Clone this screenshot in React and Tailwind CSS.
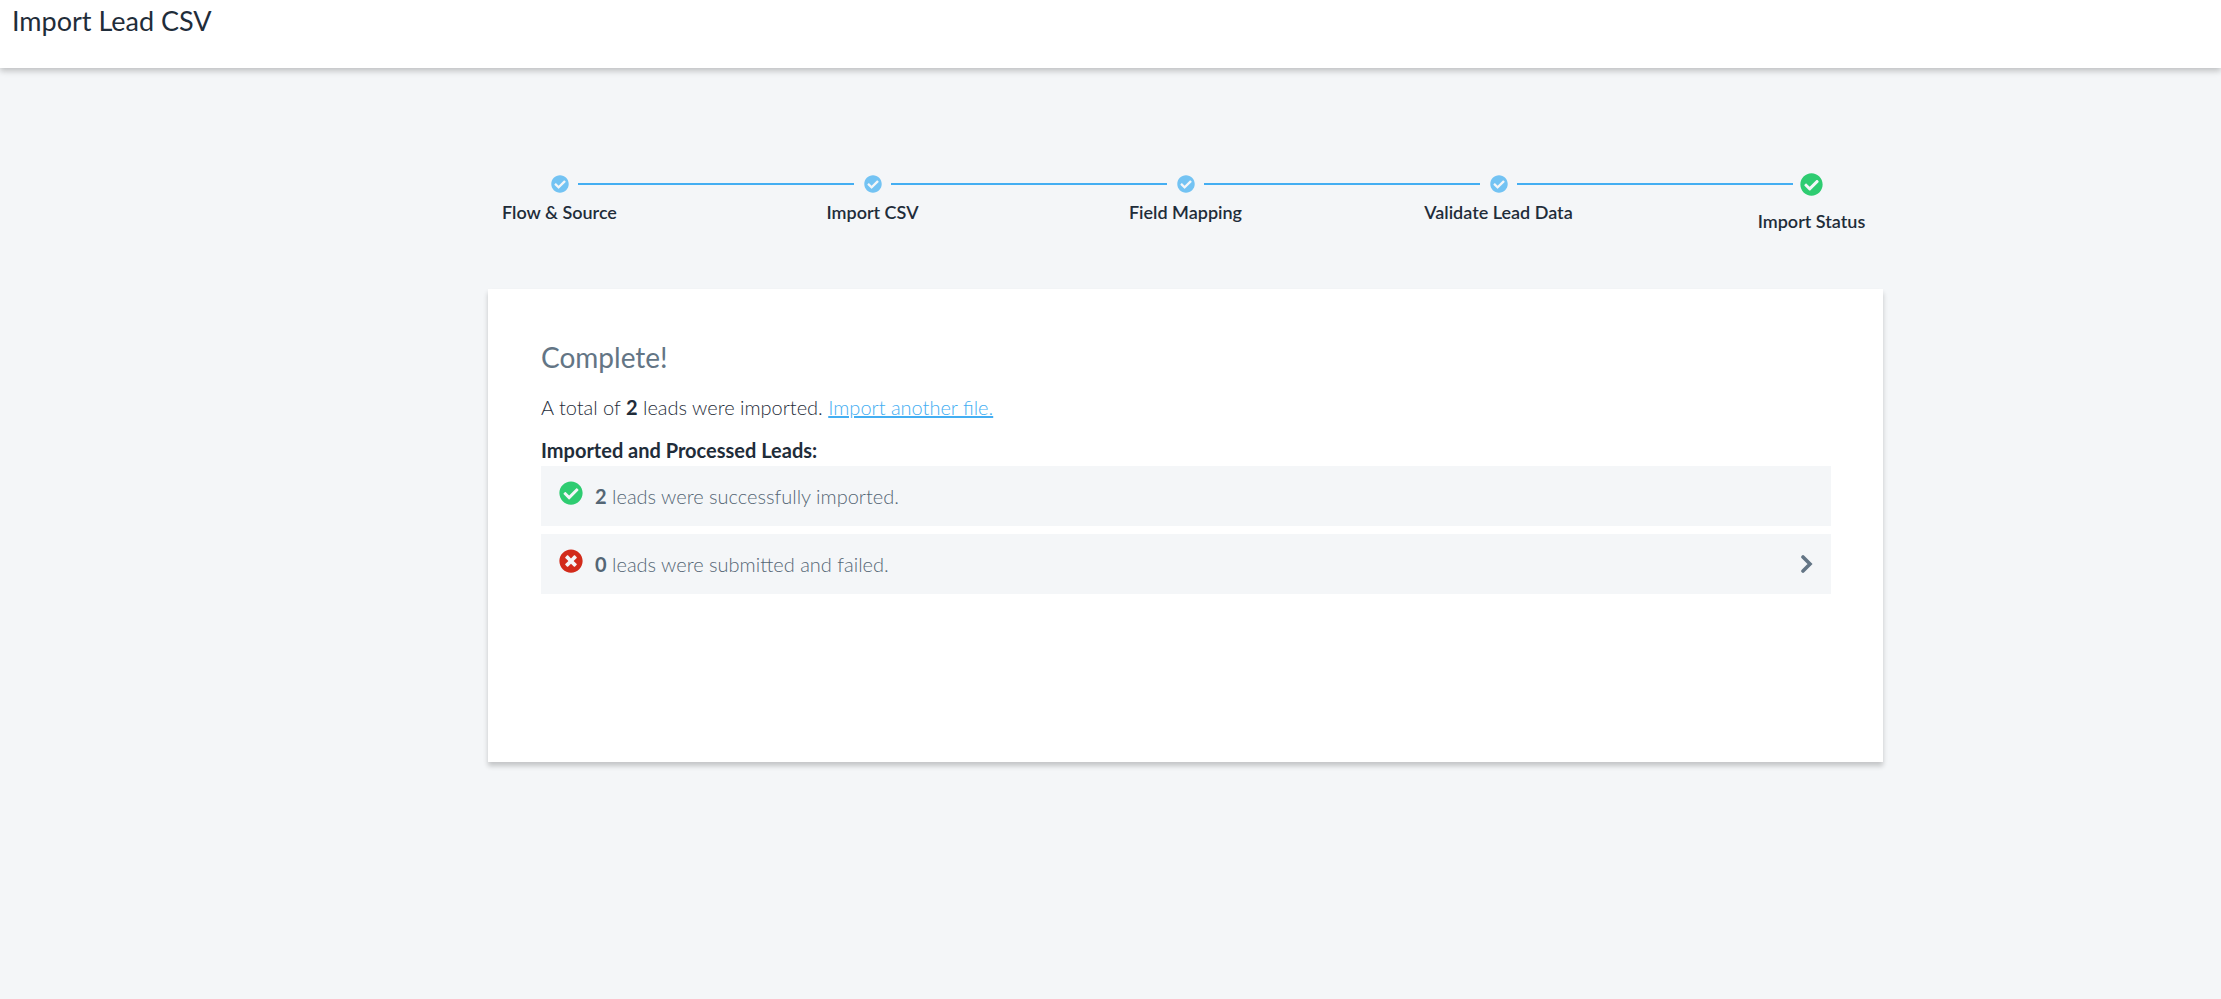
import { FaCheckCircle, FaTimesCircle } from "react-icons/fa";

const steps = ["Flow & Source", "Import CSV", "Field Mapping", "Validate Lead Data", "Import Status"];

function Step({ label, first, last }) {
  return (
    <li className="flex flex-col items-center">
      <div className="flex h-6 w-full items-center">
        <span className={first ? "flex-1" : "h-[2px] flex-1 bg-[#44aef2]"} />
        <span className="flex w-[37px] justify-center">
          {last ? (
            <FaCheckCircle className="size-[23px] text-[#2ecc71]" />
          ) : (
            <FaCheckCircle className="size-[18px] text-[#73c3f3]" />
          )}
        </span>
        <span className={last ? "flex-1" : "h-[2px] flex-1 bg-[#44aef2]"} />
      </div>
      <span className={last ? "mt-[13px] text-[18px] leading-6 font-semibold" : "mt-1 text-[18px] leading-6 font-semibold"}>
        {label}
      </span>
    </li>
  );
}

export default function App() {
  return (
    <div className="min-h-screen bg-[#f4f6f8] font-['Lato',sans-serif] text-[#1f2d3a]">
      <header className="h-[68px] bg-white px-3 shadow-[0_3px_6px_rgba(0,0,0,0.22)]">
        <h1 className="text-[27px] leading-[42px]">Import Lead CSV</h1>
      </header>
      <main className="pt-[104px] pl-[150px]">
        <ol className="mx-auto grid max-w-[1565px] grid-cols-5">
          {steps.map((label, i) => (
            <Step key={label} label={label} first={i === 0} last={i === steps.length - 1} />
          ))}
        </ol>
        <section className="mx-auto mt-14 min-h-[473px] max-w-[1395px] bg-white py-[52px] pr-[52px] pl-[53px] shadow-[0_4px_5px_rgba(0,0,0,0.2)]">
          <h2 className="text-[28px] leading-8 text-[#637585]">Complete!</h2>
          <p className="mt-[22px] text-[20px] leading-6 font-light">
            A total of <strong className="font-bold">2</strong> leads were imported.{" "}
            <a href="#import" className="text-[#44aef2] underline">Import another file.</a>
          </p>
          <h3 className="mt-[19px] text-[20px] leading-6 font-bold">Imported and Processed Leads:</h3>
          <ul className="mt-1 flex flex-col gap-2 text-[20px] font-light text-[#546675]">
            <li className="flex h-[60px] items-center bg-[#f4f6f8] px-[18px]">
              <FaCheckCircle className="mr-3 mb-[6px] size-6 text-[#2ecc71]" />
              <span><strong className="font-bold">2</strong> leads were successfully imported.</span>
            </li>
            <li>
              <button type="button" className="flex h-[60px] w-full items-center bg-[#f4f6f8] px-[18px] text-left">
                <FaTimesCircle className="mr-3 mb-[6px] size-6 text-[#d22b1b]" />
                <span className="flex-1"><strong className="font-bold">0</strong> leads were submitted and failed.</span>
                <svg viewBox="0 0 12 18" className="h-[18px] w-3" fill="none" stroke="#637585" strokeWidth="3.6" aria-hidden="true">
                  <path d="M2 2L9 9L2 16" strokeLinecap="round" strokeLinejoin="miter" />
                </svg>
              </button>
            </li>
          </ul>
        </section>
      </main>
    </div>
  );
}
